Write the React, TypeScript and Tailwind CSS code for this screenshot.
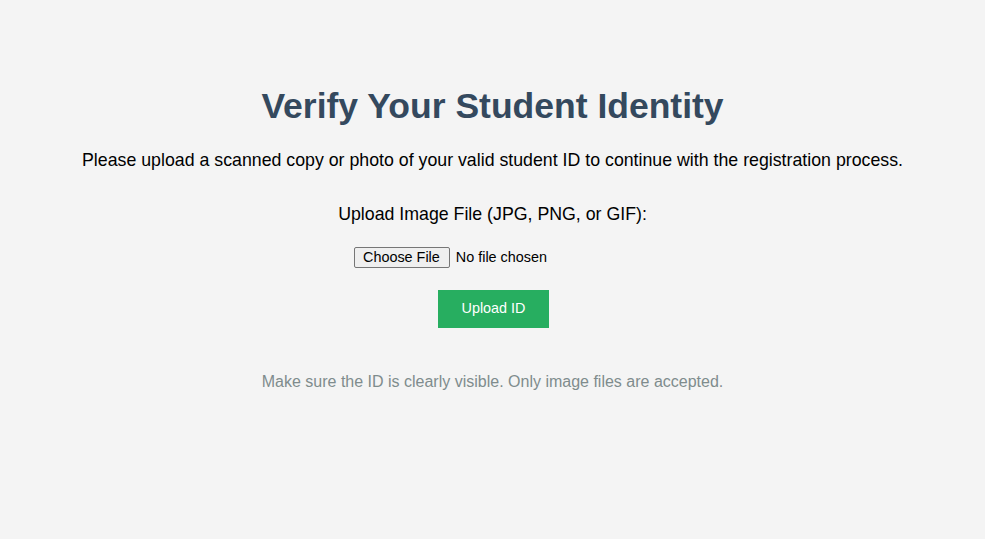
export default function App() {
  return (
    <div className="min-h-[539px] bg-[#f4f4f4] font-['Liberation_Sans',Arial,sans-serif] text-black">
      <div className="flex flex-col items-center text-center pt-[86px]">
        <h1 className="text-[35.5px] leading-[41px] font-bold text-[#34495e]">Verify Your Student Identity</h1>
        <p className="mt-[23px] text-[17.75px] leading-[21px]">
          Please upload a scanned copy or photo of your valid student ID to continue with the registration process.
        </p>
        <label htmlFor="id-file" className="mt-[33px] text-[17.75px] leading-[21px]">
          Upload Image File (JPG, PNG, or GIF):
        </label>
        <input
          id="id-file"
          type="file"
          accept="image/*"
          className="mt-[22px] w-[277px] text-left text-[14.4px] leading-[17px] file:mr-[6px] file:border file:border-solid file:border-[#767676] file:bg-[#efefef] file:pl-[8px] file:pr-[9px] file:py-[1px] file:rounded-[2px] file:text-black"
        />
        <button className="mt-[22px] ml-[2px] h-[38px] w-[111px] bg-[#27ae60] text-white text-[14.4px]">
          Upload ID
        </button>
        <p className="mt-[45px] text-[16px] leading-[18px] text-[#7f8c8d]">
          Make sure the ID is clearly visible. Only image files are accepted.
        </p>
      </div>
    </div>
  );
}
